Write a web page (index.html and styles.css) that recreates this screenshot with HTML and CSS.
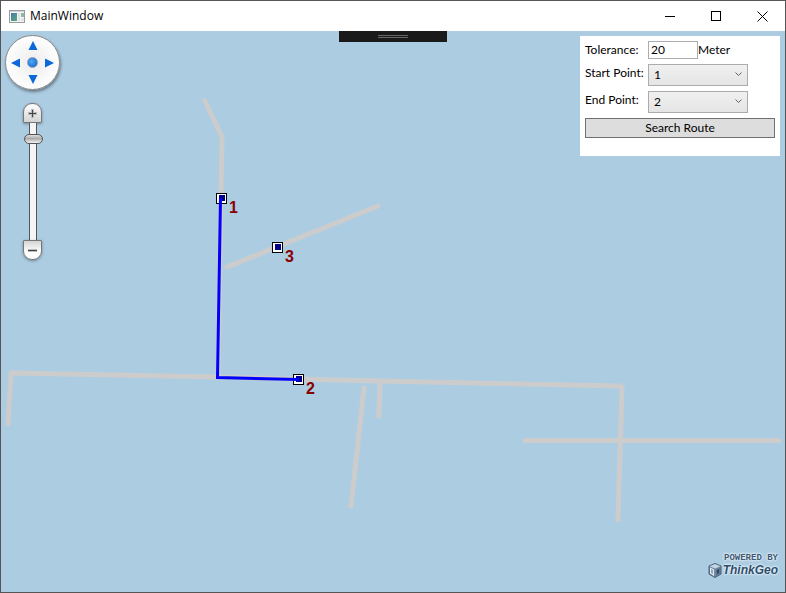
FILE: index.html
```html
<!DOCTYPE html>
<html lang="en">
<head>
<meta charset="utf-8">
<title>MainWindow</title>
<link rel="stylesheet" href="styles.css">
</head>
<body>
<div class="window">
  <header class="titlebar">
    <svg class="app-icon" width="16" height="13" viewBox="0 0 16 13" aria-hidden="true">
      <defs>
        <linearGradient id="appPane" x1="0" y1="0" x2="1" y2="1">
          <stop offset="0" stop-color="#4a78b0"/><stop offset="1" stop-color="#55a878"/>
        </linearGradient>
      </defs>
      <rect x="0.500" y="0.500" width="15" height="12" fill="#f4f4f4" stroke="#9a9da0"/>
      <rect x="1" y="1" width="14" height="1" fill="#d0d4d8"/>
      <rect x="2" y="3" width="6" height="8" fill="url(#appPane)"/>
      <rect x="9" y="3" width="2" height="8" fill="#dfe3e6"/>
      <rect x="12" y="3" width="3" height="4" fill="#8fb8a8"/>
      <rect x="12" y="8" width="3" height="3" fill="#dfe3e6"/>
    </svg>
    <h1 class="title">MainWindow</h1>
    <div class="caption-buttons">
      <button class="caption-button" type="button" aria-label="Minimize">
        <svg width="11" height="11" viewBox="0 0 11 11"><path d="M0 5.500H10"/></svg>
      </button>
      <button class="caption-button" type="button" aria-label="Maximize">
        <svg width="11" height="11" viewBox="0 0 11 11"><path d="M.5 .5H9.500V9.500H.5Z"/></svg>
      </button>
      <button class="caption-button" type="button" aria-label="Close">
        <svg class="close-glyph" width="11" height="11" viewBox="0 0 11 11"><path d="M.5 .5L10.500 10.500M10.500 .5L.5 10.500"/></svg>
      </button>
    </div>
  </header>

  <main class="map">
    <svg class="map-canvas" viewBox="1 31 784 561" preserveAspectRatio="xMinYMin slice" role="img" aria-label="Road map with route">
      <g class="roads">
        <path d="M205 101L222 137L221 195L218 377"/>
        <path d="M227 267L378 206"/>
        <path d="M8 424L11 373L218 377L380 381L621 386L622 388L618 520"/>
        <path d="M380 381L379 416"/>
        <path d="M364 388L351 506"/>
        <path d="M525 440.500H779"/>
      </g>
      <g class="stops">
        <g transform="translate(221.500 198.500)"><rect class="stop-box" x="-5" y="-5" width="10" height="10"/><rect class="stop-core" x="-2.500" y="-3.500" width="6" height="6"/></g>
        <g transform="translate(298.500 379.500)"><rect class="stop-box" x="-5" y="-5" width="10" height="10"/><rect class="stop-core" x="-2.500" y="-3.500" width="6" height="6"/></g>
        <g transform="translate(277.500 247.500)"><rect class="stop-box" x="-5" y="-5" width="10" height="10"/><rect class="stop-core" x="-2.500" y="-3.500" width="6" height="6"/></g>
      </g>
      <path class="route" d="M220.500 198L217.500 377.500L299 379.500"/>
      <g class="stop-labels">
        <text x="229" y="213">1</text>
        <text x="306" y="394">2</text>
        <text x="285" y="262">3</text>
      </g>
    </svg>

    <div class="debug-bar"><span class="grip"></span></div>

    <nav class="navigation" aria-label="Map navigation">
      <div class="pan">
        <button class="pan-button north" type="button" aria-label="Pan up"><svg width="10" height="9" viewBox="0 0 10 9"><path d="M5 0L9.500 9H.5Z"/></svg></button>
        <button class="pan-button west" type="button" aria-label="Pan left"><svg width="9" height="10" viewBox="0 0 9 10"><path d="M0 5L9 .5V9.500Z"/></svg></button>
        <button class="pan-button home" type="button" aria-label="Full extent"><span class="home-dot"></span></button>
        <button class="pan-button east" type="button" aria-label="Pan right"><svg width="9" height="10" viewBox="0 0 9 10"><path d="M9 5L0 .5V9.500Z"/></svg></button>
        <button class="pan-button south" type="button" aria-label="Pan down"><svg width="10" height="9" viewBox="0 0 10 9"><path d="M5 9L9.500 0H.5Z"/></svg></button>
      </div>
      <div class="zoom">
        <button class="zoom-button zoom-in" type="button" aria-label="Zoom in"><svg width="9" height="9" viewBox="0 0 9 9"><path d="M3 0H6V3H9V6H6V9H3V6H0V3H3Z" fill="#bbb"/><path d="M4 1H5V4H8V5H5V8H4V5H1V4H4Z" fill="#444"/></svg></button>
        <input class="zoom-slider" type="range" min="0" max="19" value="17" aria-label="Zoom level">
        <button class="zoom-button zoom-out" type="button" aria-label="Zoom out"><svg width="9" height="3" viewBox="0 0 9 3"><path d="M0 0H9V3H0Z" fill="#bbb"/><path d="M0 1H9V2H0Z" fill="#444"/></svg></button>
      </div>
    </nav>

    <form class="panel">
      <label for="tolerance">Tolerance:</label>
      <div class="field">
        <input class="tolerance" id="tolerance" type="text" value="20"><span>Meter</span>
      </div>
      <label for="start">Start Point:</label>
      <div class="combo">
        <select id="start"><option selected>1</option><option>2</option><option>3</option></select>
        <svg class="chevron" width="7" height="5" viewBox="0 0 7 5" aria-hidden="true"><path d="M.5 .5L3.500 3.500L6.500 .5"/></svg>
      </div>
      <label for="end">End Point:</label>
      <div class="combo">
        <select id="end"><option>1</option><option selected>2</option><option>3</option></select>
        <svg class="chevron" width="7" height="5" viewBox="0 0 7 5" aria-hidden="true"><path d="M.5 .5L3.500 3.500L6.500 .5"/></svg>
      </div>
      <button class="search" type="button">Search Route</button>
    </form>

    <div class="brand">
      <span class="powered">POWERED BY</span>
      <span class="brand-name">
        <svg width="14" height="15" viewBox="0 0 14 15" aria-hidden="true">
          <path d="M7 .5L13 3V11L7 14.500L1 11V3Z" fill="#7088a0" stroke="#46607a"/>
          <path d="M7 1L12.500 3.300L7 5.500L1.500 3.300Z" fill="#c6d5e2"/>
          <path d="M2 4.500L6 6.500V13L2 10.500Z" fill="#e4edf4"/>
          <path d="M3 6L5 7V11L3 10Z" fill="#8ea4b8"/>
          <path d="M12 4.500L8 6.500V13L12 10.500Z" fill="#5c7890"/>
          <path d="M11 6L9 7V11L11 10Z" fill="#2c4862"/>
        </svg>ThinkGeo</span>
    </div>
  </main>
</div>
</body>
</html>
```

FILE: styles.css
```css
* {
  box-sizing: border-box;
}

body {
  margin: 0;
  font: 12px/18px Lato, "Open Sans", sans-serif;
  color: #000;
}

button,
input,
select {
  margin: 0;
  font: inherit;
  color: inherit;
}

.window {
  display: flex;
  flex-direction: column;
  min-height: 100vh;
  border: 1px solid #555;
}

/* Title bar */
.titlebar {
  display: flex;
  align-items: center;
  height: 30px;
  padding-left: 8px;
  background: #fff;
}

.title {
  flex: 1;
  margin: 0 0 0 5px;
  font: 12px/18px "Open Sans", sans-serif;
}

.caption-buttons {
  display: flex;
  align-self: stretch;
}

.caption-button {
  display: flex;
  align-items: center;
  justify-content: center;
  width: 46px;
  padding: 0;
  border: 0;
  background: none;
}

.caption-button svg {
  fill: none;
  stroke: #000;
  shape-rendering: crispEdges;
}

.caption-button .close-glyph {
  shape-rendering: auto;
}

/* Map */
.map {
  position: relative;
  flex: 1;
  overflow: hidden;
  background: #accce2;
}

.map-canvas {
  position: absolute;
  inset: 0;
  width: 100%;
  height: 100%;
}

.roads {
  fill: none;
  stroke: #ccc;
  stroke-width: 5;
  stroke-linecap: round;
  stroke-linejoin: round;
}

.route {
  fill: none;
  stroke: #00f;
  stroke-width: 3;
}

.stop-box {
  fill: #fff;
  stroke: #000;
}

.stop-core {
  fill: #00008b;
}

.stop-labels {
  font: bold 16px "Liberation Sans", Arial, sans-serif;
  fill: #8b0000;
}

.debug-bar {
  position: absolute;
  top: 0;
  left: 50%;
  display: flex;
  align-items: center;
  justify-content: center;
  width: 108px;
  height: 11px;
  margin-left: -54px;
  background: #1a1a1a;
}

.grip {
  width: 30px;
  height: 3px;
  border: solid #666;
  border-width: 1px 0;
}

/* Pan and zoom */
.navigation {
  position: absolute;
  top: 4px;
  left: 4px;
  display: flex;
  flex-direction: column;
  align-items: center;
  gap: 13px;
}

.pan {
  display: grid;
  grid-template: repeat(3, 17px) / repeat(3, 17px);
  place-content: center;
  width: 55px;
  height: 55px;
  border: 1px solid #8c8c8c;
  border-radius: 50%;
  background: radial-gradient(circle, #ececec, #fff 75%);
  box-shadow: 1px 2px 3px rgba(0, 0, 0, 0.4);
}

.pan-button {
  display: flex;
  align-items: center;
  justify-content: center;
  padding: 0;
  border: 0;
  background: none;
  fill: #0a68d8;
}

.north {
  grid-area: 1 / 2;
}

.west {
  grid-area: 2 / 1;
}

.home {
  grid-area: 2 / 2;
}

.east {
  grid-area: 2 / 3;
}

.south {
  grid-area: 3 / 2;
}

.home-dot {
  width: 11px;
  height: 11px;
  border: 1px solid #8c98b8;
  border-radius: 50%;
  background: radial-gradient(circle at 40% 40%, #50a8f8, #0860c8);
}

.zoom {
  display: flex;
  flex-direction: column;
  align-items: center;
}

.zoom-button {
  display: flex;
  align-items: center;
  justify-content: center;
  width: 19px;
  height: 20px;
  padding: 0;
  border: 1px solid #777;
  background: linear-gradient(#fff, #d4d4d4);
  box-shadow: 0 1px 3px rgba(0, 0, 0, 0.35);
}

.zoom-in {
  border-radius: 9px 9px 1px 1px;
}

.zoom-out {
  border-radius: 1px 1px 9px 9px;
  background: linear-gradient(#d4d4d4, #fff 60%);
}

.zoom-slider {
  width: 19px;
  height: 117px;
  appearance: none;
  background: none;
  direction: rtl;
  writing-mode: vertical-lr;
}

.zoom-slider::-webkit-slider-runnable-track {
  width: 8px;
  height: 117px;
  margin: 0 auto;
  border: solid #555;
  border-width: 0 1px;
  background: #f5f5f5;
}

.zoom-slider::-webkit-slider-thumb {
  width: 19px;
  height: 10px;
  margin-left: -6px;
  appearance: none;
  border: 1px solid #555;
  border-radius: 5px;
  background: linear-gradient(#ddd, #aaa 45%, #f4f4f4);
}

/* Route form */
.panel {
  position: absolute;
  top: 5px;
  right: 5px;
  display: grid;
  grid-template-columns: 63px 1fr;
  row-gap: 5px;
  width: 200px;
  padding: 5px 5px 18px;
  background: #fff;
}

.field {
  display: flex;
}

.tolerance {
  width: 50px;
  height: 18px;
  padding: 0 2px;
  border: 1px solid #abadb3;
}

.combo {
  position: relative;
  width: 100px;
}

.combo select {
  display: block;
  width: 100%;
  height: 22px;
  padding: 0 5px;
  appearance: none;
  border: 1px solid #acacac;
  border-radius: 0;
  background: linear-gradient(#f0f0f0, #e5e5e5);
}

.chevron {
  position: absolute;
  top: 8px;
  right: 6px;
  fill: none;
  stroke: #606060;
  pointer-events: none;
}

.search {
  grid-column: 1 / -1;
  height: 20px;
  padding: 0;
  border: 1px solid #707070;
  background: #ddd;
}

/* Branding */
.brand {
  position: absolute;
  right: 7px;
  bottom: 14px;
  display: flex;
  flex-direction: column;
  align-items: flex-end;
  color: #3c5a74;
  text-shadow: 0 0 2px #fff, 0 0 3px #fff;
}

.powered {
  font: bold 9px/9px "Liberation Mono", monospace;
}

.brand-name {
  display: flex;
  align-items: center;
  gap: 1px;
  font: italic bold 12px/15px "Liberation Sans", sans-serif;
  color: #2c4e6c;
}
```
